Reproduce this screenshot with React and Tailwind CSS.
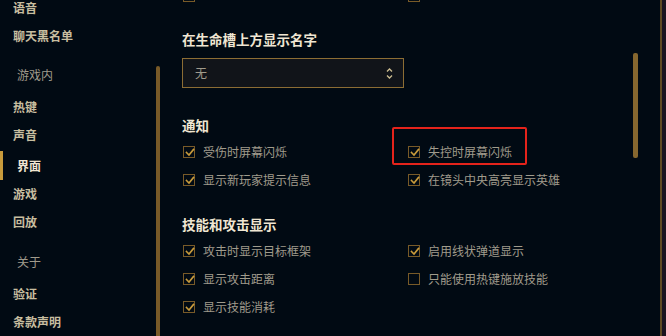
import React from "react";

const font = { fontFamily: '"Noto Sans CJK SC", "Noto Sans", sans-serif' };

function Check({ checked = true }) {
  return (
    <span className="relative w-[12px] h-[12px] shrink-0 border border-[#785a28] bg-[#010a13]">
      {checked && (
        <svg
          viewBox="0 0 12 12"
          className="absolute left-0 top-0 w-[12px] h-[12px] overflow-visible"
        >
          <path
            d="M2.5 5.5 L5 8 L9.5 2.5"
            fill="none"
            stroke="#c89b3c"
            strokeWidth="1.6"
            strokeLinecap="square"
          />
        </svg>
      )}
    </span>
  );
}

function Option({ label, checked = true, className = "" }) {
  return (
    <div className={`h-[28px] flex items-center ${className}`}>
      <span className="ml-[1px] flex">
        <Check checked={checked} />
      </span>
      <span className="ml-[8px] text-[12px] text-[#a09b8c] leading-none whitespace-nowrap">
        {label}
      </span>
    </div>
  );
}

function NavItem({ label, className = "" }) {
  return (
    <div
      className={`h-[28px] flex items-center pl-[13px] text-[12px] font-bold text-[#c8bea0] leading-none ${className}`}
    >
      {label}
    </div>
  );
}

function NavHeader({ label, className = "" }) {
  return (
    <div
      className={`h-[28px] flex items-center pl-[17px] text-[12px] text-[#a09b8c] leading-none ${className}`}
    >
      {label}
    </div>
  );
}

function Heading({ children, className = "" }) {
  return (
    <div
      className={`h-[20px] flex items-center text-[13.5px] font-bold text-[#f0e6d2] leading-none ${className}`}
    >
      {children}
    </div>
  );
}

export default function App() {
  return (
    <div
      className="w-[666px] h-[336px] flex overflow-hidden bg-[#010a13]"
      style={font}
    >
      {/* Sidebar */}
      <aside className="w-[156px] shrink-0 flex flex-col">
        <NavItem label="语音" className="-mt-[6px]" />
        <NavItem label="聊天黑名单" />
        <NavHeader label="游戏内" className="mt-[11px]" />
        <NavItem label="热键" className="mt-[4px]" />
        <NavItem label="声音" />
        <div className="mt-[2px] h-[29px] flex items-center">
          <span className="w-[3px] h-full bg-[#c89b3c]" />
          <span className="pl-[14px] text-[12px] font-bold text-[#f0e6d2] leading-none">
            界面
          </span>
        </div>
        <NavItem label="游戏" />
        <NavItem label="回放" />
        <NavHeader label="关于" className="mt-[12px]" />
        <NavItem label="验证" className="mt-[4px]" />
        <NavItem label="条款声明" />
      </aside>

      {/* Sidebar scrollbar */}
      <div className="w-[4px] shrink-0 flex flex-col pt-[66px]">
        <div className="flex-1 rounded-t-[2px] bg-[#785a28]" />
      </div>

      {/* Main */}
      <main className="flex-1 flex pl-[22px]">
        <div className="flex-1 flex flex-col">
          <div className="grid grid-cols-[225px_1fr] -mt-[18px]">
            <Option label="" />
            <Option label="" />
          </div>

          <Heading className="mt-[20px]">在生命槽上方显示名字</Heading>
          <div className="mt-[8px] w-[222px] h-[30px] flex items-center justify-between border border-[#8c6d34] bg-[#111419] pl-[12px] pr-[10px]">
            <span className="text-[12px] text-[#a09b8c] leading-none">无</span>
            <svg viewBox="0 0 7 13" className="w-[7px] h-[13px]">
              <path
                d="M1 4.5 L3.5 2 L6 4.5 M1 8.5 L3.5 11 L6 8.5"
                fill="none"
                stroke="#cdbe91"
                strokeWidth="1.3"
              />
            </svg>
          </div>

          <Heading className="mt-[28px]">通知</Heading>
          <div className="grid grid-cols-[225px_1fr] mt-[2px]">
            <Option label="受伤时屏幕闪烁" />
            <div className="relative">
              <Option label="失控时屏幕闪烁" />
              <div className="absolute -left-[15px] -top-[11px] w-[135px] h-[38px] border-2 border-[#e5231b] rounded-[2px]" />
            </div>
            <Option label="显示新玩家提示信息" />
            <Option label="在镜头中央高亮显示英雄" />
          </div>

          <Heading className="mt-[21px]">技能和攻击显示</Heading>
          <div className="grid grid-cols-[225px_1fr] mt-[2px]">
            <Option label="攻击时显示目标框架" />
            <Option label="启用线状弹道显示" />
            <Option label="显示攻击距离" />
            <Option label="只能使用热键施放技能" checked={false} />
            <Option label="显示技能消耗" />
          </div>
        </div>

        {/* Content scrollbar */}
        <div className="w-[5px] shrink-0 pt-[53px]">
          <div className="h-[105px] rounded-[2px] bg-[#86672f]" />
        </div>

        <div className="w-[22px] shrink-0" />
        <div className="w-[2px] shrink-0 bg-[#5f4a24]" />
        <div className="w-[4px] shrink-0 bg-[#1b1420]" />
      </main>
    </div>
  );
}
